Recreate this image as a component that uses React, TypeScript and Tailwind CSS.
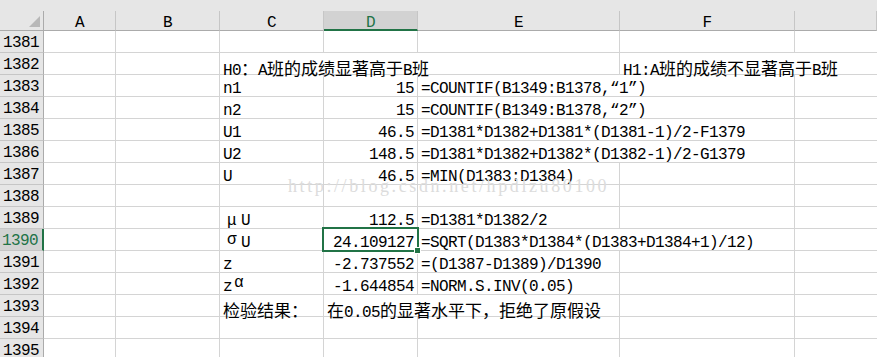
import type { ReactNode } from "react"

// Sheet columns after the row-number gutter; G is wide, its letter sits off to the right
const COLS = ["A", "B", "C", "D", "E", "F", "G"]

const CJK = /([\u3000-\u303f\u4e00-\u9fff\uff00-\uffef]+)/

// Latin runs use the mono face, Chinese runs get a slightly larger CJK face
function Txt({ s }: { s: string }) {
  return (
    <>
      {s.split(CJK).map((part, i) =>
        i % 2 === 1 ? (
          <span key={i} className="font-['Noto_Sans_CJK_SC',sans-serif] text-[17px] tracking-normal">
            {part}
          </span>
        ) : (
          part
        )
      )}
    </>
  )
}

type Cell = { col: number; span?: number; text?: ReactNode; right?: boolean; selected?: boolean }
type Row = { n: number; cells: Cell[] }

const spanCls: Record<number, string> = { 1: "", 2: "col-span-2", 3: "col-span-3" }

const rows: Row[] = [
  { n: 1381, cells: [] },
  {
    n: 1382,
    cells: [
      { col: 2, span: 3, text: <Txt s="H0：A班的成绩显著高于B班" /> },
      { col: 5, span: 2, text: <Txt s="H1:A班的成绩不显著高于B班" /> },
    ],
  },
  {
    n: 1383,
    cells: [
      { col: 2, text: "n1" },
      { col: 3, text: "15", right: true },
      { col: 4, span: 2, text: "=COUNTIF(B1349:B1378,“1”)" },
    ],
  },
  {
    n: 1384,
    cells: [
      { col: 2, text: "n2" },
      { col: 3, text: "15", right: true },
      { col: 4, span: 2, text: "=COUNTIF(B1349:B1378,“2”)" },
    ],
  },
  {
    n: 1385,
    cells: [
      { col: 2, text: "U1" },
      { col: 3, text: "46.5", right: true },
      { col: 4, span: 2, text: "=D1381*D1382+D1381*(D1381-1)/2-F1379" },
    ],
  },
  {
    n: 1386,
    cells: [
      { col: 2, text: "U2" },
      { col: 3, text: "148.5", right: true },
      { col: 4, span: 2, text: "=D1381*D1382+D1382*(D1382-1)/2-G1379" },
    ],
  },
  {
    n: 1387,
    cells: [
      { col: 2, text: "U" },
      { col: 3, text: "46.5", right: true },
      { col: 4, text: "=MIN(D1383:D1384)" },
    ],
  },
  { n: 1388, cells: [] },
  {
    n: 1389,
    cells: [
      {
        col: 2,
        text: (
          <>
            <span className="inline-block w-[18px] pl-[4px]">μ</span>U
          </>
        ),
      },
      { col: 3, text: "112.5", right: true },
      { col: 4, text: "=D1381*D1382/2" },
    ],
  },
  {
    n: 1390,
    cells: [
      {
        col: 2,
        text: (
          <>
            <span className="relative -top-[3px] inline-block w-[18px] pl-[4px]">σ</span>U
          </>
        ),
      },
      { col: 3, text: "24.109127", right: true, selected: true },
      { col: 4, span: 2, text: "=SQRT(D1383*D1384*(D1383+D1384+1)/12)" },
    ],
  },
  {
    n: 1391,
    cells: [
      { col: 2, text: "z" },
      { col: 3, text: "-2.737552", right: true },
      { col: 4, text: "=(D1387-D1389)/D1390" },
    ],
  },
  {
    n: 1392,
    cells: [
      {
        col: 2,
        text: (
          <>
            z<span className="relative -top-[4px] pl-[2px]">α</span>
          </>
        ),
      },
      { col: 3, text: "-1.644854", right: true },
      { col: 4, text: "=NORM.S.INV(0.05)" },
    ],
  },
  {
    n: 1393,
    cells: [
      { col: 2, text: <Txt s="检验结果：" /> },
      { col: 3, span: 2, text: <Txt s="在0.05的显著水平下，拒绝了原假设" /> },
    ],
  },
  { n: 1394, cells: [] },
  { n: 1395, cells: [] },
]

const SELECTED_ROW = 1390
const SELECTED_COL = 3

function RowCells({ row }: { row: Row }) {
  const out: ReactNode[] = []
  let c = 0
  while (c < COLS.length) {
    const cell = row.cells.find((x) => x.col === c)
    const span = cell?.span ?? 1
    const last = c + span >= COLS.length
    out.push(
      <div
        key={c}
        className={`relative h-[22px] whitespace-nowrap border-b border-[#d4d4d4] px-[3px] pt-[4px] leading-[21px] ${
          last ? "" : "border-r"
        } ${spanCls[span]} ${cell?.right ? "text-right" : "text-left"}`}
      >
        {cell?.text}
        {cell?.selected && (
          <div className="absolute -left-[2px] -top-[2px] z-10 h-[25px] w-[97px] border-2 border-[#217346]">
            <div className="absolute -bottom-[4px] -right-[4px] h-[7px] w-[7px] border border-white bg-[#217346]" />
          </div>
        )}
      </div>
    )
    c += span
  }
  return <>{out}</>
}

export default function App() {
  return (
    <div className="relative h-[357px] w-[877px] overflow-hidden bg-white font-['Liberation_Mono','Noto_Sans_CJK_SC',monospace] text-[16px] tracking-[-0.6px] text-black">
      <div className="h-[11px] bg-[#e6e6e6]" />
      <div className="grid grid-cols-[44px_72px_104px_104px_94px_202px_175px_1fr]">
        {/* column headers */}
        <div className="flex h-[20px] items-end justify-end border-b border-r border-[#ababab] bg-[#e6e6e6] pb-[3px] pr-[3px]">
          <svg width="11" height="11" viewBox="0 0 11 11">
            <polygon points="11,0 11,11 0,11" fill="#b8b8b8" />
          </svg>
        </div>
        {COLS.map((l, i) => (
          <div
            key={l}
            className={`h-[20px] pt-[2px] text-center leading-[21px] ${
              i === SELECTED_COL
                ? "border-b-2 border-r border-b-[#217346] border-r-[#c6c6c6] bg-[#d2d2d2] text-[#217346]"
                : "border-b border-r border-b-[#ababab] border-r-[#c6c6c6] bg-[#e6e6e6]"
            }`}
          >
            {i < COLS.length - 1 ? l : ""}
          </div>
        ))}

        {rows.map((row) => (
          <div key={row.n} className="contents">
            <div
              className={`h-[22px] border-b border-b-[#c6c6c6] pr-[4px] pt-[2px] text-right leading-[21px] ${
                row.n === SELECTED_ROW
                  ? "border-r-2 border-r-[#217346] bg-[#d2d2d2] text-[#217346]"
                  : "border-r border-r-[#ababab] bg-[#e6e6e6]"
              }`}
            >
              {row.n}
            </div>
            <RowCells row={row} />
          </div>
        ))}
      </div>

      {/* blog watermark across the sheet */}
      <div className="pointer-events-none absolute left-[288px] top-[175px] whitespace-nowrap font-['Liberation_Serif',serif] text-[18px] leading-[22px] tracking-[2.6px] text-[#dcdcdc]">
        http://blog.csdn.net/hpdlzu80100
      </div>
    </div>
  )
}
